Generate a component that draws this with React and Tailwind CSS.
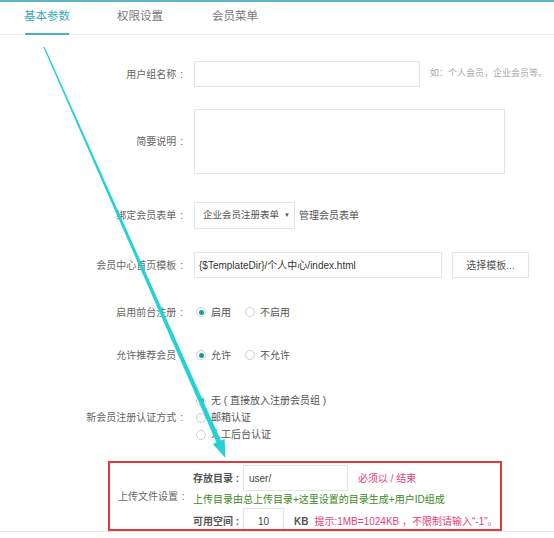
import React from "react";

function Radio({ checked, label, className = "" }) {
  return (
    <span className={"flex items-center " + className}>
      <span className="w-[10px] h-[10px] rounded-full border border-[#cfcfcf] flex items-center justify-center bg-white">
        {checked && <span className="w-[5px] h-[5px] rounded-full bg-[#16a08f]" />}
      </span>
      <span className="ml-[5px] whitespace-nowrap">{label}</span>
    </span>
  );
}

function Label({ children }) {
  return (
    <div className="w-[186px] shrink-0 flex justify-end text-[#666] pr-[3px] whitespace-nowrap">
      <span>{children}</span>
      <span className="ml-[4px]">:</span>
    </div>
  );
}

export default function App() {
  return (
    <div className="relative w-[554px] h-[538px] bg-white overflow-hidden font-['Liberation_Sans','Noto_Sans_CJK_SC',sans-serif] text-[10px] text-[#666]">
      <div className="h-[2px] bg-[#5db3c4]" />
      {/* tabs */}
      <div className="flex h-[33px] border-b border-[#e8ecec] text-[11.5px] leading-none">
        <div className="relative ml-[24px] w-[46px] pt-[9px] text-[#3fa9bd]">
          基本参数
          <div className="absolute left-[1px] right-[1px] bottom-[-1px] h-[2px] bg-[#49b0c2]" />
        </div>
        <div className="ml-[47px] pt-[9px] text-[#777]">权限设置</div>
        <div className="ml-[49px] pt-[9px] text-[#777]">会员菜单</div>
      </div>

      {/* row 1 */}
      <div className="flex items-center mt-[26px] h-[26px]">
        <Label>用户组名称</Label>
        <div className="ml-[8px] w-[226px] h-[26px] border border-[#e2e6e6]" />
        <div className="ml-[10px] text-[9px] text-[#aaa] whitespace-nowrap">如：个人会员，企业会员等。</div>
      </div>

      {/* row 2 */}
      <div className="flex items-center mt-[22px] h-[65px]">
        <Label>简要说明</Label>
        <div className="ml-[8px] w-[311px] h-[65px] border border-[#e2e6e6]" />
      </div>

      {/* row 3 */}
      <div className="flex items-center mt-[28px] h-[27px]">
        <Label>绑定会员表单</Label>
        <div className="ml-[8px] w-[101px] h-[27px] border border-[#e2e6e6] flex items-center pl-[8px] text-[#555] whitespace-nowrap text-[9.5px]">
          企业会员注册表单
          <span className="ml-[5px] text-[6px]">▼</span>
        </div>
        <div className="ml-[4px] text-[#555]">管理会员表单</div>
      </div>

      {/* row 4 */}
      <div className="flex items-center mt-[23px] h-[26px]">
        <Label>会员中心首页模板</Label>
        <div className="ml-[8px] w-[248px] h-[26px] border border-[#e2e6e6] flex items-center pl-[4px] text-[#333]">
          {"{$TemplateDir}/个人中心/index.html"}
        </div>
        <div className="ml-[10px] w-[77px] h-[26px] border border-[#e2e6e6] flex items-center justify-center text-[#555]">
          选择模板...
        </div>
      </div>

      {/* row 5 */}
      <div className="flex items-center mt-[24px] h-[20px]">
        <Label>启用前台注册</Label>
        <div className="ml-[10px] flex items-center text-[#555]">
          <Radio checked label="启用" />
          <Radio label="不启用" className="ml-[14px]" />
        </div>
      </div>

      {/* row 6 */}
      <div className="flex items-center mt-[23px] h-[20px]">
        <Label>允许推荐会员</Label>
        <div className="ml-[10px] flex items-center text-[#555]">
          <Radio checked label="允许" />
          <Radio label="不允许" className="ml-[14px]" />
        </div>
      </div>

      {/* row 7 */}
      <div className="flex items-center mt-[27px]">
        <Label>新会员注册认证方式</Label>
        <div className="ml-[10px] flex flex-col text-[#555]">
          <Radio checked label="无 ( 直接放入注册会员组 )" className="h-[17px]" />
          <Radio label="邮箱认证" className="h-[17px]" />
          <Radio label="人工后台认证" className="h-[17px]" />
        </div>
      </div>

      {/* red box */}
      <div className="ml-[108px] mt-[18px] w-[394px] h-[70px] border-2 border-[#e2393f] overflow-hidden flex items-center">
        <div className="w-[83px] pl-[8px] shrink-0 text-[#666] whitespace-nowrap">
          上传文件设置<span className="ml-[4px]">:</span>
        </div>
        <div className="flex flex-col self-start">
          <div className="flex items-center mt-[2px] h-[26px]">
            <div className="w-[50px] font-bold text-[#555] whitespace-nowrap">存放目录 :</div>
            <div className="w-[105px] h-[26px] border border-[#e2e6e6] flex items-center pl-[5px] text-[#444]">user/</div>
            <div className="ml-[10px] text-[#e5407a]">必须以 / 结束</div>
          </div>
          <div className="h-[16px] flex items-center text-[#3b8a25] whitespace-nowrap">
            上传目录由总上传目录+这里设置的目录生成+用户ID组成
          </div>
          <div className="flex items-center h-[26px] mt-[1px]">
            <div className="w-[50px] font-bold text-[#555] whitespace-nowrap">可用空间 :</div>
            <div className="w-[41px] h-[26px] border border-[#e2e6e6] flex items-center justify-center text-[#444]">10</div>
            <div className="ml-[10px] font-bold text-[#555]">KB</div>
            <div className="ml-[6px] text-[#e5407a] whitespace-nowrap">提示:1MB=1024KB ，不限制请输入“-1”。</div>
          </div>
        </div>
      </div>
      <div className="h-[1px] bg-[#e6e8e8]" />

      {/* annotation arrow */}
      <svg className="absolute left-0 top-0 pointer-events-none" width="554" height="538">
        <polygon
          points="43.4,47.2 44.6,46.8 220.9,440.6 224.6,439.0 225.5,458 212.8,444.0 216.5,442.4"
          fill="#22d2d6"
        />
      </svg>
    </div>
  );
}
